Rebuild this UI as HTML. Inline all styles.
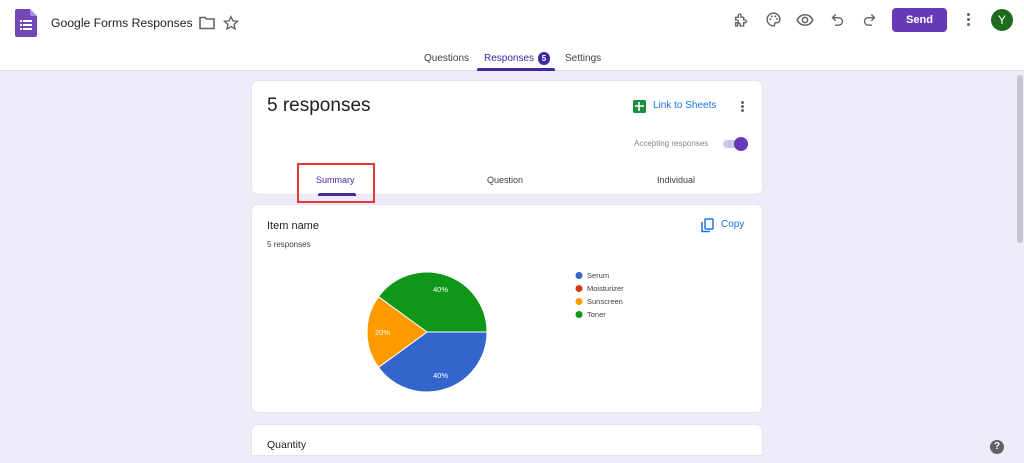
<!DOCTYPE html>
<html><head><meta charset="utf-8"><style>
*{margin:0;padding:0;box-sizing:border-box}
body{width:1024px;height:463px;overflow:hidden;background:#f0ebf8;font-family:"Liberation Sans",Arial,sans-serif;position:relative;color:#202124}
.hdr{position:absolute;left:0;top:0;width:1024px;height:71px;background:#fff;border-bottom:1px solid #e0dcea}
.abs{position:absolute}
.card{position:absolute;left:251px;width:512px;background:#fff;border-radius:7px;border:1px solid #e6e2ee}
</style></head><body>
<div class="hdr">
 <svg class="abs" style="left:15px;top:9px" width="22" height="28" viewBox="0 0 22 28"><path d="M2 0h13l7 7v19a2 2 0 0 1-2 2H2a2 2 0 0 1-2-2V2a2 2 0 0 1 2-2z" fill="#7248b9"/><path d="M15 0l7 7h-5a2 2 0 0 1-2-2z" fill="#a98ee0"/><g fill="#fff"><rect x="5" y="11" width="2" height="2"/><rect x="8" y="11" width="9" height="2"/><rect x="5" y="15" width="2" height="2"/><rect x="8" y="15" width="9" height="2"/><rect x="5" y="19" width="2" height="2"/><rect x="8" y="19" width="9" height="2"/></g></svg>
 <div class="abs" style="left:51px;top:16px;font-size:12.2px;color:#202124">Google Forms Responses</div>
 <svg class="abs" style="left:199px;top:16px" width="16" height="14" viewBox="0 0 16 14"><path d="M1 1.5h5l1.5 1.5H15v9.5H1z" fill="none" stroke="#5f6368" stroke-width="1.6"/></svg>
 <svg class="abs" style="left:223px;top:15px" width="16" height="16" viewBox="0 0 24 24"><path d="M12 2.5l2.9 6.3 6.9.7-5.2 4.6 1.5 6.8L12 17.4l-6.1 3.5 1.5-6.8L2.2 9.5l6.9-.7z" fill="none" stroke="#5f6368" stroke-width="2"/></svg>
 <svg class="abs" style="left:733px;top:12px" width="16" height="16" viewBox="0 0 24 24"><path d="M4 8h4V5a2 2 0 0 1 4 0v3h4v4h2a2 2 0 0 1 0 4h-2v5h-5v-2a2 2 0 0 0-4 0v2H4v-5h2a2 2 0 0 0 0-4H4z" fill="none" stroke="#5f6368" stroke-width="2"/></svg>
 <svg class="abs" style="left:765px;top:11px" width="17" height="17" viewBox="0 0 24 24"><path d="M12 3a9 9 0 0 0 0 18c1.5 0 2-1 1.5-2-.6-1.3.2-2.5 1.6-2.5H17a4 4 0 0 0 4-4C21 7 17 3 12 3z" fill="none" stroke="#5f6368" stroke-width="2"/><circle cx="7.5" cy="11.5" r="1.3" fill="#5f6368"/><circle cx="9.5" cy="7.5" r="1.3" fill="#5f6368"/><circle cx="14.5" cy="7.5" r="1.3" fill="#5f6368"/><circle cx="17" cy="11" r="1.3" fill="#5f6368"/></svg>
 <svg class="abs" style="left:796px;top:11px" width="18" height="18" viewBox="0 0 24 24"><path d="M1.5 12C4 7 8 5 12 5s8 2 10.5 7C20 17 16 19 12 19s-8-2-10.5-7z" fill="none" stroke="#5f6368" stroke-width="2"/><circle cx="12" cy="12" r="3.5" fill="none" stroke="#5f6368" stroke-width="2"/></svg>
 <svg class="abs" style="left:830px;top:12px" width="15" height="15" viewBox="0 0 24 24"><path d="M9 4L4 9l5 5M4 9h10a6 6 0 0 1 0 12H8" fill="none" stroke="#5f6368" stroke-width="2.2"/></svg>
 <svg class="abs" style="left:862px;top:12px" width="15" height="15" viewBox="0 0 24 24"><path d="M15 4l5 5-5 5M20 9H10a6 6 0 0 0 0 12h6" fill="none" stroke="#5f6368" stroke-width="2.2"/></svg>
 <div class="abs" style="left:892px;top:8px;width:55px;height:24px;background:#673ab7;border-radius:4px;color:#fff;font-size:11px;font-weight:bold;text-align:center;line-height:24px">Send</div>
 <div class="abs" style="left:967px;top:13px;width:3px;height:3px;background:#5f6368;border-radius:50%;box-shadow:0 5px 0 #5f6368,0 10px 0 #5f6368"></div>
 <div class="abs" style="left:991px;top:9px;width:22px;height:22px;background:#1e6b1e;border-radius:50%;color:#fff;font-size:12px;text-align:center;line-height:22px">Y</div>
 <div class="abs" style="left:424px;top:53px;font-size:10px;color:#3c4043">Questions</div>
 <div class="abs" style="left:484px;top:53px;font-size:10px;color:#4527a0">Responses</div>
 <div class="abs" style="left:538px;top:52px;width:12px;height:13px;background:#4527a0;border-radius:6px;color:#fff;font-size:8px;font-weight:bold;text-align:center;line-height:13px">5</div>
 <div class="abs" style="left:565px;top:53px;font-size:10px;color:#3c4043">Settings</div>
 <div class="abs" style="left:477px;top:68px;width:78px;height:3px;background:#4527a0;border-radius:2px 2px 0 0"></div>
</div>
<div class="abs" style="left:1017px;top:75px;width:6px;height:168px;background:#c7c3cf;border-radius:3px"></div>

<div class="card" style="top:80px;height:115px">
 <div class="abs" style="left:15px;top:14px;font-size:19px;color:#202124">5 responses</div>
 <svg class="abs" style="left:381px;top:19px" width="13" height="13" viewBox="0 0 13 13"><rect width="13" height="13" rx="1.5" fill="#1e8e3e"/><path d="M2 6h9M6 2v9" stroke="#fff" stroke-width="1.6"/></svg>
 <div class="abs" style="left:401px;top:19px;font-size:10px;color:#1a73e8">Link to Sheets</div>
 <div class="abs" style="left:489px;top:20px;width:3px;height:3px;background:#5f6368;border-radius:50%;box-shadow:0 4px 0 #5f6368,0 8px 0 #5f6368"></div>
 <div class="abs" style="left:382px;top:58px;font-size:8px;color:#80868b">Accepting responses</div>
 <div class="abs" style="left:471px;top:59px;width:22px;height:8px;background:#cfc3e8;border-radius:4px"></div>
 <div class="abs" style="left:482px;top:56px;width:14px;height:14px;background:#673ab7;border-radius:50%"></div>
 <div class="abs" style="left:64px;top:94px;font-size:9px;color:#4527a0">Summary</div>
 <div class="abs" style="left:66px;top:112px;width:38px;height:3px;background:#4527a0;border-radius:2px 2px 0 0"></div>
 <div class="abs" style="left:235px;top:94px;font-size:9px;color:#3c4043">Question</div>
 <div class="abs" style="left:405px;top:94px;font-size:9px;color:#3c4043">Individual</div>
</div>
<div class="abs" style="left:297px;top:163px;width:78px;height:40px;border:2px solid #e53935"></div>

<div class="card" style="top:204px;height:209px">
 <div class="abs" style="left:15px;top:15px;font-size:11px;color:#202124">Item name</div>
 <div class="abs" style="left:15px;top:35px;font-size:8px;color:#3c4043">5 responses</div>
 <svg class="abs" style="left:449px;top:13px" width="13" height="15" viewBox="0 0 13 15"><rect x="4" y="1" width="8" height="10" rx="1" fill="none" stroke="#1a73e8" stroke-width="1.5"/><path d="M1 4v9.5h8" fill="none" stroke="#1a73e8" stroke-width="1.5"/></svg>
 <div class="abs" style="left:469px;top:14px;font-size:10px;color:#1a73e8">Copy</div>
</div>
<svg class="abs" style="left:0;top:0" width="1024" height="463">
 <path d="M427 332L487 332A60 60 0 0 1 378.5 367.3Z" fill="#3366cc" stroke="#fff" stroke-width="1"/>
 <path d="M427 332L378.5 367.3A60 60 0 0 1 378.5 296.7Z" fill="#ff9900" stroke="#fff" stroke-width="1"/>
 <path d="M427 332L378.5 296.7A60 60 0 0 1 487 332Z" fill="#109618" stroke="#fff" stroke-width="1"/>
 <g font-family="Liberation Sans,Arial,sans-serif" font-size="7.5" fill="#fff"><text x="433" y="292">40%</text><text x="375" y="335">20%</text><text x="433" y="378">40%</text></g>
 <g font-family="Liberation Sans,Arial,sans-serif" font-size="7.5" fill="#3c4043">
  <circle cx="579" cy="275.5" r="3.5" fill="#3366cc"/><text x="587" y="278">Serum</text>
  <circle cx="579" cy="288.5" r="3.5" fill="#dc3912"/><text x="587" y="291">Moisturizer</text>
  <circle cx="579" cy="301.5" r="3.5" fill="#ff9900"/><text x="587" y="304">Sunscreen</text>
  <circle cx="579" cy="314.5" r="3.5" fill="#109618"/><text x="587" y="317">Toner</text>
 </g>
</svg>
<div class="card" style="top:424px;height:32px;border-radius:7px 7px 0 0">
 <div class="abs" style="left:15px;top:14px;font-size:10.5px;color:#202124">Quantity</div>
</div>
<div class="abs" style="left:990px;top:440px;width:14px;height:14px;background:#5f6368;border-radius:50%;color:#fff;font-size:10px;font-weight:bold;text-align:center;line-height:14px">?</div>
</body></html>
